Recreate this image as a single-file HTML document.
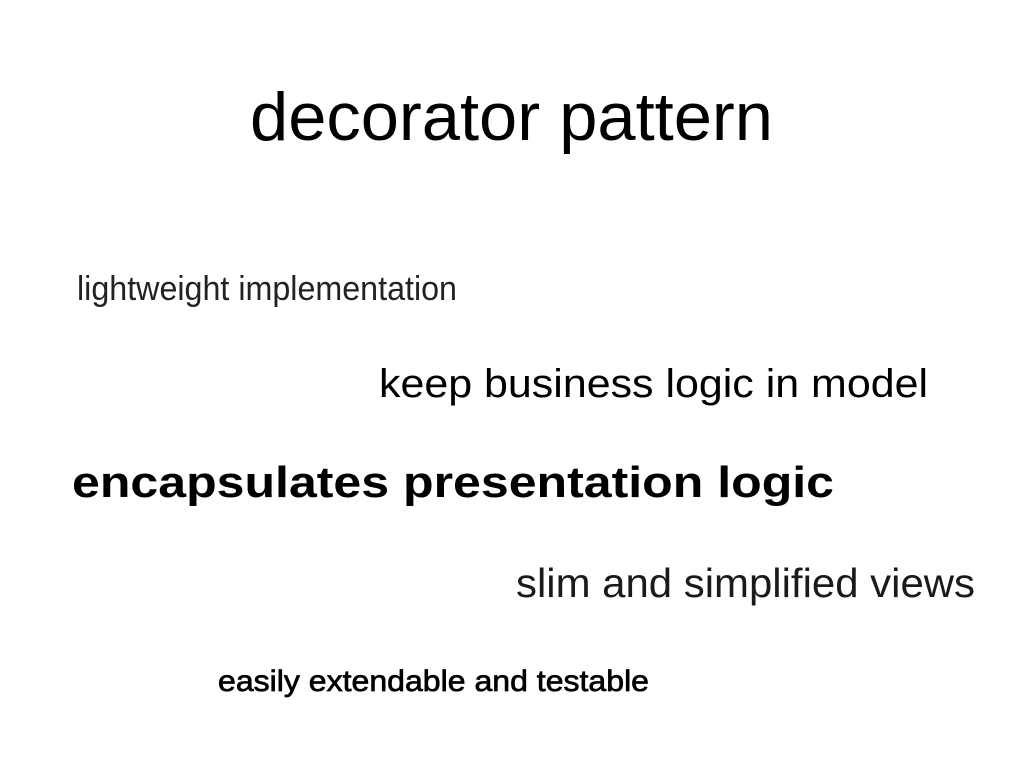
<!DOCTYPE html>
<html><head><meta charset="utf-8"><style>
html,body{margin:0;padding:0;background:#fff;width:1024px;height:768px;overflow:hidden}
svg{display:block}
text{font-family:"Liberation Sans",sans-serif;fill:#000}
</style></head><body>
<svg width="1024" height="768" viewBox="0 0 1024 768" xmlns="http://www.w3.org/2000/svg">
<text x="250" y="140" font-size="68" textLength="523" lengthAdjust="spacingAndGlyphs">decorator pattern</text>
<text x="77" y="300" font-size="34" textLength="380" lengthAdjust="spacingAndGlyphs" style="fill:#222">lightweight implementation</text>
<text x="379" y="397" font-size="40" textLength="549" lengthAdjust="spacingAndGlyphs">keep business logic in model</text>
<text x="72" y="497" font-size="44" font-weight="bold" textLength="762" lengthAdjust="spacingAndGlyphs">encapsulates presentation logic</text>
<text x="516" y="597" font-size="41" textLength="459" lengthAdjust="spacingAndGlyphs" style="fill:#1a1a1a">slim and simplified views</text>
<text x="218" y="691" font-size="30" textLength="431" lengthAdjust="spacingAndGlyphs" style="stroke:#000;stroke-width:0.7">easily extendable and testable</text>
</svg>
</body></html>
